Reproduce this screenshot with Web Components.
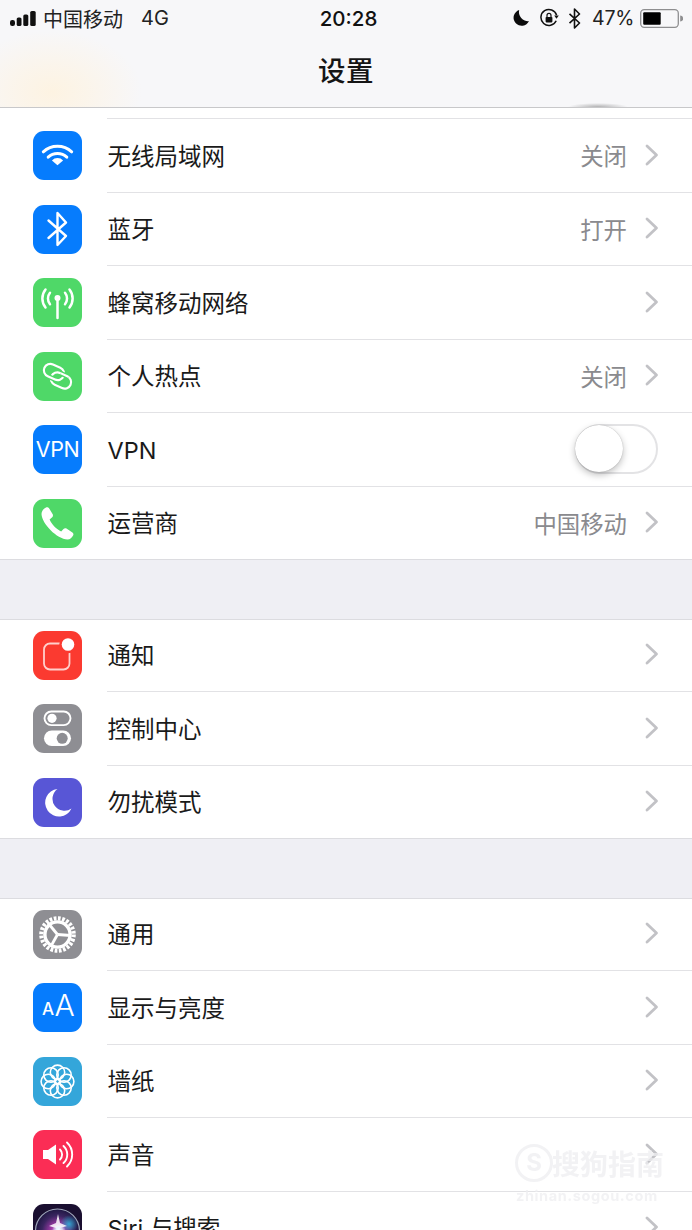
<!DOCTYPE html>
<html lang="zh"><head><meta charset="utf-8"><title>设置</title>
<style>
html,body{margin:0;padding:0;background:#fff}
body{width:692px;height:1230px;overflow:hidden;font-family:"Inter","Noto Sans CJK SC",sans-serif}
</style></head><body>
<settings-page>
  <ios-header></ios-header>
  <div style="height:11px"></div>
  <settings-group first>
    <settings-row label="无线局域网" value="关闭"><app-icon slot="icon" name="wifi"></app-icon></settings-row>
    <settings-row label="蓝牙" value="打开"><app-icon slot="icon" name="bluetooth"></app-icon></settings-row>
    <settings-row label="蜂窝移动网络"><app-icon slot="icon" name="cellular"></app-icon></settings-row>
    <settings-row label="个人热点" value="关闭"><app-icon slot="icon" name="hotspot"></app-icon></settings-row>
    <settings-row label="VPN" nochevron><app-icon slot="icon" name="vpn"></app-icon><ios-switch slot="accessory"></ios-switch></settings-row>
    <settings-row label="运营商" value="中国移动" last><app-icon slot="icon" name="phone"></app-icon></settings-row>
  </settings-group>
  <settings-gap></settings-gap>
  <settings-group>
    <settings-row label="通知"><app-icon slot="icon" name="notify"></app-icon></settings-row>
    <settings-row label="控制中心"><app-icon slot="icon" name="control"></app-icon></settings-row>
    <settings-row label="勿扰模式" last><app-icon slot="icon" name="moon"></app-icon></settings-row>
  </settings-group>
  <settings-gap></settings-gap>
  <settings-group>
    <settings-row label="通用"><app-icon slot="icon" name="gear"></app-icon></settings-row>
    <settings-row label="显示与亮度"><app-icon slot="icon" name="display"></app-icon></settings-row>
    <settings-row label="墙纸"><app-icon slot="icon" name="wallpaper"></app-icon></settings-row>
    <settings-row label="声音"><app-icon slot="icon" name="sound"></app-icon></settings-row>
    <settings-row label="Siri 与搜索"><app-icon slot="icon" name="siri"></app-icon></settings-row>
  </settings-group>
  <sogou-mark></sogou-mark>
</settings-page>
<script>
const CJK='"Noto Sans CJK SC"';
const S=(d)=>`<svg viewBox="0 0 49 49" width="49" height="49" fill="none" stroke="none">${d}</svg>`;
const petals=[0,45,90,135,180,225,270,315].map(a=>`<circle cx="24.5" cy="15.3" r="7.2" transform="rotate(${a} 24.5 24.5)"/>`).join('');
const A_='<rect x="10.5" y="13.5" width="21" height="13" rx="6.5" transform="rotate(24 21 20)"/>';
const B_='<rect x="17.5" y="22" width="21" height="13" rx="6.5" transform="rotate(24 28 28.5)"/>';
const ICONS={
 wifi:['#067cfd',S(`<g stroke="#fff" stroke-width="3" stroke-linecap="round"><path d="M10.3 20.8A21 21 0 0 1 38.7 20.8"/><path d="M15.2 26.1A13.6 13.6 0 0 1 33.8 26.1"/></g><path fill="#fff" d="M24.5 34.3L18.9 29.4A8 8 0 0 1 30.1 29.4Z"/>`)],
 bluetooth:['#067cfd',S(`<path stroke="#fff" stroke-width="2.4" stroke-linejoin="round" stroke-linecap="round" d="M15.5 15.5L33 31L24.5 40V8L33 17.5L15.5 33"/>`)],
 cellular:['#4fd868',S(`<g stroke="#fff" stroke-width="2.5" stroke-linecap="round"><path d="M12.5 11.5A14.5 14.5 0 0 0 12.5 29.5"/><path d="M17 14.8A9 9 0 0 0 17 26.2"/><path d="M36.5 11.5A14.5 14.5 0 0 1 36.5 29.5"/><path d="M32 14.8A9 9 0 0 1 32 26.2"/><path d="M24.5 21V40"/></g><circle cx="24.5" cy="20" r="3" fill="#fff"/>`)],
 hotspot:['#4fd868',S(`<defs><clipPath id="hc"><circle cx="32" cy="22.5" r="4.5"/></clipPath></defs><g stroke="#fff" stroke-width="2.1">${B_}<g stroke="#4fd868" stroke-width="5">${A_}</g>${A_}<g clip-path="url(#hc)"><g stroke="#4fd868" stroke-width="5">${B_}</g>${B_}</g></g>`)],
 vpn:['#067cfd',S(`<text x="24.5" y="31.5" text-anchor="middle" font-family="Inter,Roboto,sans-serif" font-size="21.5" letter-spacing="-.4" fill="#fff">VPN</text>`)],
 phone:['#4fd868',S(`<path fill="#fff" d="M13 8.5C10.8 9.5 8.5 12 8.5 15C9 25 24 40 34.5 40.5C37 40.5 39.2 38.3 40.2 36.2C40.7 35 40.3 34 39.4 33.4L33.5 29.6C32.5 29 31.3 29.2 30.5 30L28.2 32.4C23.5 30.4 18.5 25.2 16.6 20.5L19.2 18.2C20 17.4 20.2 16.2 19.7 15.3L16.2 9.5C15.5 8.5 14.2 8 13 8.5Z"/>`)],
 notify:['#fb3a30',S(`<rect x="11" y="12.5" width="25.5" height="26" rx="6" stroke="#ffd0cc" stroke-width="1.8"/><circle cx="35" cy="13.5" r="8.7" fill="#fb3a30"/><circle cx="35" cy="13.5" r="6.3" fill="#fff"/>`)],
 control:['#8e8e93',S(`<rect x="11.5" y="7.5" width="26" height="13.6" rx="6.8" stroke="#fff" stroke-width="1.9"/><circle cx="19" cy="14.3" r="4.6" fill="#fff"/><rect x="11" y="26.5" width="27" height="15.5" rx="7.75" fill="#fff"/><circle cx="29.2" cy="34.3" r="5.5" fill="#8e8e93"/>`)],
 moon:['#5856d6',S(`<path fill="#fff" d="M24.5 11A13.8 13.8 0 1 0 38.5 30.5A12 12 0 0 1 24.5 11Z"/>`)],
 gear:['#8e8e93',S(`<circle cx="24.5" cy="24.5" r="16.2" stroke="#fff" stroke-width="4.2" stroke-dasharray="2.7 1.54"/><circle cx="24.5" cy="24.5" r="12.6" stroke="#fff" stroke-width="3.4"/><g stroke="#fff" stroke-width="2.8"><path d="M24.5 24.5L15 13"/><path d="M24.5 24.5L38 25.5"/><path d="M24.5 24.5L17.5 37"/></g>`)],
 display:['#067cfd',S(`<g fill="#fff" font-family="Inter,Roboto,sans-serif" text-anchor="middle"><text x="15" y="32" font-size="17" font-weight="500">A</text><text x="31.5" y="33" font-size="30" font-weight="300">A</text></g>`)],
 wallpaper:['#34a6da',S(`<g stroke="#fff" stroke-width="1.6">${petals}<circle cx="24.5" cy="24.5" r="2.6"/></g>`)],
 sound:['#fb2d55',S(`<path fill="#fff" d="M10 20H15L23 14.5V34.5L15 29H10Z"/><g stroke="#fff" stroke-width="1.9" stroke-linecap="round"><path d="M27 19.5A7 7 0 0 1 27 29.5"/><path d="M30.5 16A11.5 11.5 0 0 1 30.5 33"/><path d="M34 12.5A16.5 16.5 0 0 1 34 36.5"/></g>`)],
 siri:['#1a0f30',S(`<defs><radialGradient id="sg" cx=".5" cy=".5" r=".5"><stop offset="0" stop-color="#c9b8f0"/><stop offset=".3" stop-color="#a03aa8"/><stop offset=".7" stop-color="#3a2560"/><stop offset=".95" stop-color="#241a48"/></radialGradient><radialGradient id="sb" cx=".5" cy=".5" r=".5"><stop offset="0" stop-color="#2ec0e8" stop-opacity=".8"/><stop offset="1" stop-color="#2ec0e8" stop-opacity="0"/></radialGradient><radialGradient id="sw" cx=".5" cy=".5" r=".5"><stop offset="0" stop-color="#fff"/><stop offset=".5" stop-color="#e6f6ff" stop-opacity=".8"/><stop offset="1" stop-color="#fff" stop-opacity="0"/></radialGradient></defs><circle cx="24.5" cy="27" r="22" fill="url(#sg)" stroke="#9fa6ba" stroke-width="1.2"/><circle cx="36" cy="20" r="9" fill="url(#sb)"/><path fill="#fff" opacity=".85" d="M25 10L27 19L34 22L27 24L25 30L23 24L16 22L23 19Z"/><circle cx="26" cy="27" r="7" fill="url(#sw)"/>`)]
};
class Base extends HTMLElement{
  constructor(){super();this.attachShadow({mode:'open'});}
}
class SettingsPage extends Base{connectedCallback(){this.shadowRoot.innerHTML=`<style>:host{display:block;position:relative;width:692px;height:1230px;overflow:hidden;background:#fff;color:#000}</style><slot></slot>`;}}
class IosHeader extends Base{connectedCallback(){this.shadowRoot.innerHTML=`<style>
:host{display:block;height:108px;box-sizing:border-box;border-bottom:1px solid #c8c8ca;
 background:
 radial-gradient(ellipse 30px 4px at 598px 107px,rgba(120,120,120,.55),rgba(120,120,120,0)),
 radial-gradient(ellipse 90px 62px at 52px 92px,#fdf3e2 0%,rgba(252,244,231,.8) 40%,rgba(247,247,249,0) 100%),
 #f7f7f9;color:#111}
.status{display:flex;align-items:center;height:36px;padding:0 10px;font:400 20px "Inter",${CJK},sans-serif;position:relative}
.left{display:flex;align-items:center;flex:1}
.carrier{font-family:${CJK};margin-left:7px;font-size:20px;color:#222}
.net{margin-left:18px;font-size:20px;color:#222}
.time{font:500 20.5px "Inter",sans-serif;color:#111;flex:none;width:80px;text-align:center;margin-left:5px}
.right{display:flex;align-items:center;flex:1;justify-content:flex-end;gap:0}
.pct{font-size:19.5px;letter-spacing:-.3px;color:#222;margin:0 6px 0 11px}
h1{margin:0;font:500 27.5px/40px ${CJK},sans-serif;text-align:center;padding-top:13px;color:#151515;letter-spacing:.5px}
svg{display:block;flex:none}
</style>
<div class="status">
 <div class="left">
  <svg width="26" height="15" viewBox="0 0 26 15" fill="#111"><rect x="0" y="9" width="5" height="6" rx="2.2"/><rect x="6.7" y="6.5" width="4.8" height="8.5" rx="1.6"/><rect x="13.3" y="3.5" width="5" height="11.5" rx="1.6"/><rect x="20.2" y="0" width="5.5" height="15" rx="1.6"/></svg>
  <span class="carrier">中国移动</span><span class="net">4G</span>
 </div>
 <div class="time">20:28</div>
 <div class="right">
  <svg width="18" height="18" viewBox="0 0 17 17" fill="#0c0c0c"><path d="M6.8 1A7.6 7.6 0 1 0 16 11.4A8.5 8.5 0 0 1 6.8 1Z"/></svg>
  <svg style="margin-left:9px" width="20" height="20" viewBox="0 0 20 20" fill="none" stroke="#111"><path stroke-width="1.5" d="M17.2 12.8A8 8 0 1 1 17.6 7.2"/><path fill="#111" stroke="none" d="M15.2 7.6h4.6l-2.3 3.2Z"/><rect x="6.6" y="9" width="6.8" height="5.4" rx=".8" fill="#111" stroke="none"/><path stroke-width="1.2" d="M8 9V7.4a2 2 0 0 1 4 0V9"/></svg>
  <svg style="margin-left:9px" width="13" height="21" viewBox="0 0 13 21" fill="none" stroke="#111" stroke-width="1.6" stroke-linejoin="round"><path d="M1.5 5.8L11.5 15L6.5 20V1L11.5 6L1.5 15.2"/></svg>
  <span class="pct">47%</span>
  <svg width="43" height="19" viewBox="0 0 43 19" style="margin-right:-1px"><rect x=".7" y=".7" width="37.6" height="17.6" rx="3.5" fill="none" stroke="#8e8e90" stroke-width="1.3"/><rect x="3.2" y="3.2" width="17.5" height="12.6" rx="1" fill="#000"/><path d="M40.2 6.5a3 3 0 0 1 0 6Z" fill="#8e8e90"/></svg>
 </div>
</div>
<h1>设置</h1>`;}}
class SettingsGroup extends Base{connectedCallback(){const first=this.hasAttribute('first');this.shadowRoot.innerHTML=`<style>:host{display:block;background:#fff;position:relative;${first?'':'box-shadow:inset 0 1px 0 #dcdce0'}}
.line{position:absolute;left:107px;right:0;top:-1px;height:1px;background:#e2e2e5;display:${first?'block':'none'}}</style><div class="line"></div><slot></slot>`;}}
class SettingsGap extends Base{connectedCallback(){this.shadowRoot.innerHTML=`<style>:host{display:block;height:58.5px;background:#efeff4}</style>`;}}
class SettingsRow extends Base{connectedCallback(){
 const label=this.getAttribute('label'),value=this.getAttribute('value')||'',last=this.hasAttribute('last'),noc=this.hasAttribute('nochevron');
 this.shadowRoot.innerHTML=`<style>
 :host{display:block;position:relative;height:73.5px;box-sizing:border-box}
 .row{display:flex;align-items:center;height:100%;padding:0 33px 0 33px;box-sizing:border-box}
 .icon{flex:none;width:49px;height:49px;display:block}
 .label{margin-left:25.5px;flex:1;font:400 23.5px/30px "Inter",${CJK},sans-serif;color:#1a1a1a;padding-top:2px;white-space:nowrap}
 .value{font:400 23.4px/30px ${CJK},sans-serif;color:#8a8a8e;margin-right:18px;margin-top:-1px;white-space:nowrap}
 .chev{flex:none;display:block;margin-right:0;margin-top:-2px}
 .sep{position:absolute;bottom:0;right:0;height:1px;background:${last?'#dcdce0':'#e2e2e5'};left:${last?0:107}px}
 </style><div class="row"><slot name="icon" class="icon"></slot><span class="label">${label}</span>${value?`<span class="value">${value}</span>`:''}<slot name="accessory"></slot>${noc?'':`<svg class="chev" width="14" height="22" viewBox="0 0 14 22" fill="none" stroke="#c2c2c6" stroke-width="2.8" stroke-linecap="round" stroke-linejoin="round"><path d="M2 2L11.5 11L2 20"/></svg>`}</div><div class="sep"></div>`;
}}
class AppIcon extends Base{connectedCallback(){const [bg,svg]=ICONS[this.getAttribute('name')];this.shadowRoot.innerHTML=`<style>:host{display:block;width:49px;height:49px;border-radius:11px;overflow:hidden;background:${bg}} svg{display:block}</style>${svg}`;}}
class IosSwitch extends Base{connectedCallback(){this.shadowRoot.innerHTML=`<style>
 :host{display:block;position:relative;width:83px;height:50px;box-sizing:border-box;margin-right:1px;margin-top:-2px;border:2px solid #e3e3e5;border-radius:25px;background:#fff}
 .k{position:absolute;left:-2px;top:-1px;width:48px;height:47px;border-radius:50%;background:#fff;box-shadow:0 3px 7px rgba(0,0,0,.25),0 0 1px rgba(0,0,0,.3)}
 </style><div class="k"></div>`;}}
class SogouMark extends Base{connectedCallback(){this.shadowRoot.innerHTML=`<style>
 :host{position:absolute;left:515px;top:1142px;width:156px;height:64px;color:rgba(238,238,240,.75);font-family:${CJK},sans-serif;pointer-events:none;filter:blur(.7px)}
 .t{display:flex;align-items:center;height:42px}
 .c{width:38px;height:38px;box-sizing:border-box;border:3px solid currentColor;border-radius:50%;font:700 24px/32px "Inter",sans-serif;text-align:center;flex:none}
 .n{font-size:28px;font-weight:700;line-height:42px;margin-left:-1px;white-space:nowrap}
 .u{font:700 14.5px/18px "Inter",sans-serif;letter-spacing:.6px;margin-top:3px;white-space:nowrap;padding-left:1px}
 </style><div class="t"><div class="c">S</div><div class="n">搜狗指南</div></div><div class="u">zhinan.sogou.com</div>`;}}
customElements.define('settings-page',SettingsPage);
customElements.define('ios-header',IosHeader);
customElements.define('settings-group',SettingsGroup);
customElements.define('settings-gap',SettingsGap);
customElements.define('settings-row',SettingsRow);
customElements.define('app-icon',AppIcon);
customElements.define('ios-switch',IosSwitch);
customElements.define('sogou-mark',SogouMark);
</script>
</body></html>
